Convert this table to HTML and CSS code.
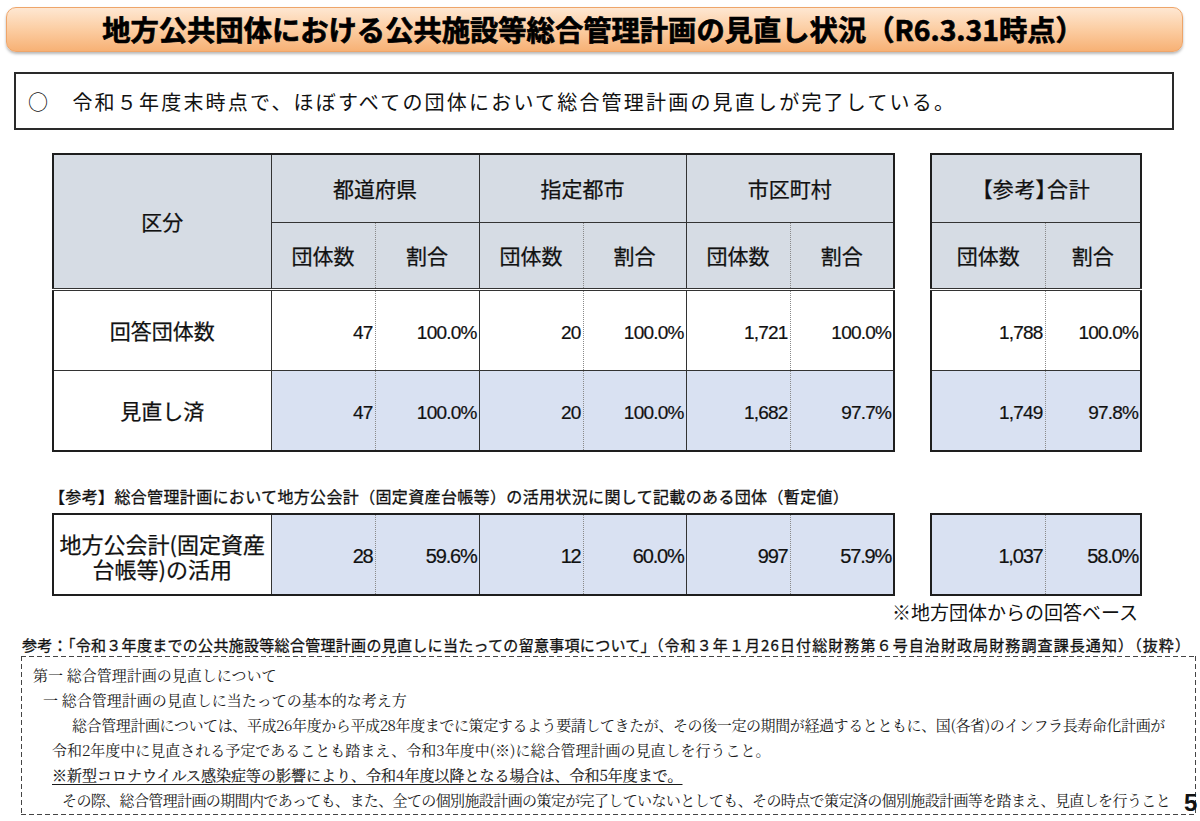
FILE: index.html
```html
<!DOCTYPE html>
<html lang="ja">
<head>
<meta charset="utf-8">
<title>公共施設等総合管理計画の見直し状況</title>
<link rel="stylesheet" href="styles.css">
</head>
<body>
<div class="page">
  <header class="title-bar">
    <h1>地方公共団体における公共施設等総合管理計画の見直し状況（R6.3.31時点）</h1>
  </header>

  <div class="summary">○　令和５年度末時点で、ほぼすべての団体において総合管理計画の見直しが完了している。</div>

  <div class="tables">
    <table class="grid main">
      <colgroup>
        <col class="c-label"><col class="c-n"><col class="c-p"><col class="c-n"><col class="c-p2"><col class="c-n"><col class="c-p">
      </colgroup>
      <thead>
        <tr class="h1">
          <th rowspan="2" class="label head-label">区分</th>
          <th colspan="2">都道府県</th>
          <th colspan="2">指定都市</th>
          <th colspan="2">市区町村</th>
        </tr>
        <tr class="h2">
          <th class="dot">団体数</th><th>割合</th>
          <th class="dot">団体数</th><th>割合</th>
          <th class="dot">団体数</th><th>割合</th>
        </tr>
      </thead>
      <tbody>
        <tr class="row">
          <th class="label">回答団体数</th>
          <td class="num dot">47</td><td class="num">100.0%</td>
          <td class="num dot">20</td><td class="num">100.0%</td>
          <td class="num dot">1,721</td><td class="num">100.0%</td>
        </tr>
        <tr class="row shaded">
          <th class="label">見直し済</th>
          <td class="num dot">47</td><td class="num">100.0%</td>
          <td class="num dot">20</td><td class="num">100.0%</td>
          <td class="num dot">1,682</td><td class="num">97.7%</td>
        </tr>
      </tbody>
    </table>

    <table class="grid total">
      <colgroup><col class="c-tn"><col class="c-tp"></colgroup>
      <thead>
        <tr class="h1"><th colspan="2" class="tight-head">【参考】合計</th></tr>
        <tr class="h2"><th class="dot">団体数</th><th>割合</th></tr>
      </thead>
      <tbody>
        <tr class="row"><td class="num dot">1,788</td><td class="num">100.0%</td></tr>
        <tr class="row shaded"><td class="num dot">1,749</td><td class="num">97.8%</td></tr>
      </tbody>
    </table>
  </div>

  <p class="ref-note">【参考】総合管理計画において地方公会計（固定資産台帳等）の活用状況に関して記載のある団体（暫定値）</p>

  <div class="tables tables-2">
    <table class="grid main">
      <colgroup>
        <col class="c-label"><col class="c-n"><col class="c-p"><col class="c-n"><col class="c-p2"><col class="c-n"><col class="c-p">
      </colgroup>
      <tbody>
        <tr class="row shaded">
          <th class="label label-2"><span class="ln">地方公会計(固定資産</span><span class="ln">台帳等)の活用</span></th>
          <td class="num num-2 dot">28</td><td class="num num-2">59.6%</td>
          <td class="num num-2 dot">12</td><td class="num num-2">60.0%</td>
          <td class="num num-2 dot">997</td><td class="num num-2">57.9%</td>
        </tr>
      </tbody>
    </table>
    <table class="grid total">
      <colgroup><col class="c-tn"><col class="c-tp"></colgroup>
      <tbody>
        <tr class="row shaded"><td class="num num-2 dot">1,037</td><td class="num num-2">58.0%</td></tr>
      </tbody>
    </table>
  </div>

  <p class="answer-base">※地方団体からの回答ベース</p>

  <p class="source"><span class="main-part">参考：「令和３年度までの公共施設等総合管理計画の見直しに当たっての留意事項について」</span><span class="tail">（令和３年１月26日付総財務第６号自治財政局財務調査課長通知）（抜粋）</span></p>

  <div class="excerpt">
    <p class="l1">第一 総合管理計画の見直しについて</p>
    <p class="l2">一 総合管理計画の見直しに当たっての基本的な考え方</p>
    <p class="l3">総合管理計画については、平成26年度から平成28年度までに策定するよう要請してきたが、その後一定の期間が経過するとともに、国(各省)のインフラ長寿命化計画が</p>
    <p class="l4">令和2年度中に見直される予定であることも踏まえ、令和3年度中(※)に総合管理計画の見直しを行うこと。</p>
    <p class="l4 under">※新型コロナウイルス感染症等の影響により、令和4年度以降となる場合は、令和5年度まで。</p>
    <p class="l6">その際、総合管理計画の期間内であっても、また、全ての個別施設計画の策定が完了していないとしても、その時点で策定済の個別施設計画等を踏まえ、見直しを行うこと</p>
  </div>

  <div class="page-no">5</div>
</div>
</body>
</html>
```

FILE: styles.css
```css
html, body {
  margin: 0;
  padding: 0;
  background: #ffffff;
}

body {
  width: 1200px;
  height: 821px;
  overflow: hidden;
  font-family: "Noto Sans CJK JP", "Noto Sans", sans-serif;
  color: #111111;
}

.page {
  position: relative;
  width: 1200px;
  height: 821px;
  padding-top: 7px;
  box-sizing: border-box;
}

/* Title */
.title-bar {
  margin: 0 17px 0 6px;
  height: 45px;
  box-sizing: border-box;
  border-radius: 10px;
  border: 1px solid #eea56a;
  background: linear-gradient(to bottom, #fee7d2 0%, #fcd0a7 45%, #f7b175 100%);
  box-shadow: 0 2px 3px rgba(0, 0, 0, 0.28);
  display: flex;
  align-items: center;
  justify-content: center;
  padding-right: 3px;
}

.title-bar h1 {
  margin: 0;
  font-size: 28.3px;
  font-weight: 700;
  line-height: 1;
  color: #000000;
  -webkit-text-stroke: 0.7px #000000;
  white-space: nowrap;
}

/* Summary box */
.summary {
  margin: 20px 0 0 14px;
  width: 1160px;
  height: 58px;
  box-sizing: border-box;
  border: 2px solid #2a2a2a;
  display: flex;
  align-items: center;
  padding-left: 12px;
  font-size: 20px;
  letter-spacing: 2.2px;
  white-space: nowrap;
}

/* Tables */
.tables {
  display: flex;
  align-items: flex-start;
  gap: 35px;
  margin: 23px 0 0 52px;
}

.tables-2 {
  margin-top: 6px;
}

.grid {
  border-collapse: collapse;
  table-layout: fixed;
  border: 2px solid #1e1e1e;
}

.grid.main { width: 841px; }
.grid.total { width: 210px; }

.c-label { width: 218px; }
.c-n { width: 104px; }
.c-p { width: 104px; }
.c-p2 { width: 103px; }
.c-tn { width: 114px; }
.c-tp { width: 96px; }

.grid th,
.grid td {
  padding: 0;
  border: 1px solid #333333;
  vertical-align: middle;
}

.grid .dot {
  border-right: 1px dotted #8a8a8a;
}

.grid .dot + th,
.grid .dot + td {
  border-left: 0 none;
}

.grid thead th {
  background: #d6dce4;
  font-size: 21px;
  font-weight: 400;
  text-align: center;
  -webkit-text-stroke: 0.25px #111111;
}

.grid thead .tight-head {
  font-feature-settings: "palt";
  letter-spacing: 0.6px;
}

.grid thead .h2 th,
.grid thead .head-label {
  border-bottom: 3px double #333333;
}

.grid .h1 { height: 68px; }
.grid .h2 { height: 67px; }
.grid .row { height: 81px; }

.grid .label {
  background: #ffffff;
  font-size: 21px;
  font-weight: 400;
  text-align: center;
  -webkit-text-stroke: 0.25px #111111;
}

.grid thead .head-label {
  background: #d6dce4;
}

.grid .label-2 {
  font-size: 22px;
  padding-top: 2px;
}

.grid .label-2 .ln {
  display: block;
  height: 25px;
  line-height: 25px;
  white-space: nowrap;
}

.grid .shaded td {
  background: #d9e1f2;
}

.grid .num {
  font-family: "Liberation Sans", Arial, sans-serif;
  font-size: 19px;
  letter-spacing: -0.8px;
  text-align: right;
  padding-right: 2px;
  padding-top: 5px;
  -webkit-text-stroke: 0.2px #111111;
}

.grid .num-2 {
  font-size: 20px;
  letter-spacing: -1.2px;
  padding-top: 3px;
}

/* Notes */
.ref-note {
  margin: 33px 0 0 49px;
  font-size: 16px;
  line-height: 22px;
  letter-spacing: 0.35px;
  -webkit-text-stroke: 0.3px #111111;
  white-space: nowrap;
}

.answer-base {
  margin: 4px 0 0 0;
  width: 1138px;
  text-align: right;
  font-size: 19px;
  line-height: 24px;
  white-space: nowrap;
}

.source {
  margin: 11px 0 0 22px;
  font-size: 15px;
  line-height: 20px;
  -webkit-text-stroke: 0.3px #111111;
  white-space: nowrap;
}

.source .main-part {
  letter-spacing: 0.3px;
}

.source .tail {
  letter-spacing: 1.1px;
}

/* Excerpt box */
.excerpt {
  margin: 1px 0 0 21px;
  width: 1175px;
  height: 159px;
  box-sizing: border-box;
  padding: 6px 0 0 0;
  font-family: "Noto Serif CJK JP", "IPAMincho", "Liberation Serif", "Noto Sans CJK JP", serif;
  font-size: 15px;
  line-height: 25px;
  color: #1a1a1a;
  background:
    linear-gradient(to right, #444 62%, transparent 62%) top left / 8px 1px repeat-x,
    linear-gradient(to right, #444 62%, transparent 62%) bottom left / 8px 1px repeat-x,
    linear-gradient(to bottom, #444 62%, transparent 62%) top left / 1px 8px repeat-y,
    linear-gradient(to bottom, #444 62%, transparent 62%) top right / 1px 8px repeat-y;
}

.excerpt p {
  margin: 0;
  white-space: nowrap;
}

.excerpt .l1 { padding-left: 12px; }
.excerpt .l2 { padding-left: 22px; }
.excerpt .l3 { padding-left: 51px; letter-spacing: -0.4px; }
.excerpt .l4 { padding-left: 31px; }
.excerpt .l6 { padding-left: 41px; letter-spacing: -0.62px; }

.excerpt .under {
  text-decoration: underline;
  text-underline-offset: 3px;
  -webkit-text-stroke: 0.2px #1a1a1a;
}

.page-no {
  position: absolute;
  left: 1184px;
  top: 789px;
  font-family: "Liberation Sans", Arial, sans-serif;
  font-weight: 700;
  font-size: 24px;
  line-height: 28px;
  color: #111111;
}
```
